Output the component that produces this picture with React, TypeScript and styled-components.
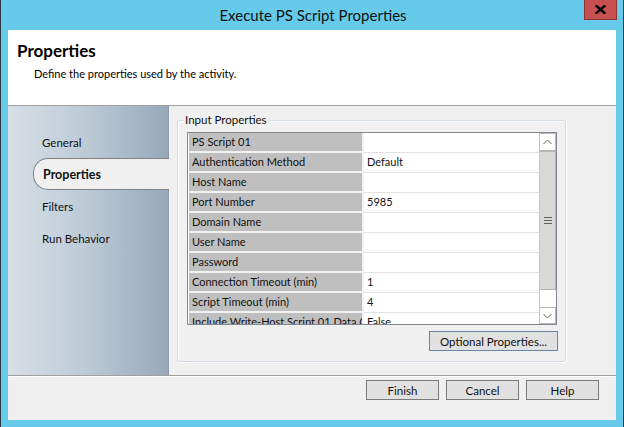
import React from "react";
import styled, { createGlobalStyle } from "styled-components";

const GlobalStyle = createGlobalStyle`
  html, body { margin: 0; padding: 0; }
  body { background: #66cbea; font-family: Lato, "Liberation Sans", sans-serif; color: #000; }
  * { box-sizing: border-box; }
`;

const Window = styled.div`
  width: 624px;
  height: 427px;
  background: #66cbea;
  border-left: 1px solid #2e3a40;
  border-right: 1px solid #2e3a40;
  padding: 0 7px 7px 7px;
  display: flex;
  flex-direction: column;
  position: relative;
`;

const TitleBar = styled.div`
  height: 30px;
  display: flex;
  align-items: center;
  justify-content: center;
`;

const Title = styled.div`
  font-size: 15px;
  color: #111;
  line-height: 30px;
  padding-left: 2px;
`;

const CloseButton = styled.div`
  position: absolute;
  top: 0;
  right: 6px;
  width: 33px;
  height: 20px;
  background: #c75050;
  border: 1px solid #8a3434;
  border-top: none;
  display: flex;
  align-items: center;
  justify-content: center;
`;

const Client = styled.div`
  flex: 1;
  display: flex;
  flex-direction: column;
  background: #f0f0f0;
`;

const Header = styled.div`
  height: 76px;
  background: #fff;
  border-bottom: 1px solid #a0a0a0;
  padding: 10px 0 0 9px;
`;

const HeaderTitle = styled.div`
  font-weight: 700;
  font-size: 17px;
  line-height: 22px;
`;

const HeaderDesc = styled.div`
  font-size: 11px;
  line-height: 15px;
  margin-top: 4px;
  padding-left: 17px;
`;

const Body = styled.div`
  height: 269px;
  display: flex;
`;

const Nav = styled.div`
  width: 161px;
  background: linear-gradient(to right, #d7dfe7 0%, #bccad6 50%, #97a8ba 100%);
  border-right: 1px solid #8f9aa6;
  padding-top: 20px;
  display: flex;
  flex-direction: column;
`;

const NavItem = styled.div<{ $active?: boolean }>`
  height: 32px;
  display: flex;
  align-items: center;
  font-size: ${(p) => (p.$active ? "12.5px" : "11.5px")};
  font-weight: ${(p) => (p.$active ? 700 : 400)};
  padding-left: ${(p) => (p.$active ? "9px" : "34px")};
  margin-left: ${(p) => (p.$active ? "25px" : "0")};
  margin-right: ${(p) => (p.$active ? "-1px" : "0")};
  background: ${(p) => (p.$active ? "#f0f0f0" : "transparent")};
  border: ${(p) => (p.$active ? "1px solid #808080" : "none")};
  border-right: none;
  border-radius: ${(p) => (p.$active ? "15px 0 0 15px" : "0")};
  color: #111;
`;

const Content = styled.div`
  flex: 1;
  padding: 14px 0 0 8px;
`;

const GroupBox = styled.div`
  position: relative;
  width: 389px;
  height: 242px;
  border: 1px solid #d2dbe3;
  border-radius: 3px;
  box-shadow: inset 1px 1px 0 #fff, 1px 1px 0 #fff;
  padding: 11px 8px 0 9px;
  display: flex;
  flex-direction: column;
`;

const Legend = styled.div`
  position: absolute;
  top: -8px;
  left: 5px;
  padding: 0 2px;
  background: #f0f0f0;
  font-size: 11.5px;
  line-height: 14px;
  color: #111;
`;

const Grid = styled.div`
  height: 193px;
  border: 1px solid #828790;
  background: #fff;
  display: flex;
`;

const Table = styled.div`
  flex: 1;
  overflow: hidden;
  padding-left: 1px;
`;

const Row = styled.div`
  display: grid;
  grid-template-columns: 173px 1fr;
  column-gap: 2px;
  height: 20px;
  background: #f2f2f2;
  align-items: start;
`;

const Label = styled.div`
  height: 18px;
  background: #bfbfbf;
  font-size: 11px;
  line-height: 18px;
  padding-left: 3px;
  white-space: nowrap;
  overflow: hidden;
  color: #111;
`;

const Value = styled.div`
  height: 20px;
  background: #fff;
  border-bottom: 1px solid #e2e2e2;
  font-size: 11px;
  line-height: 18px;
  padding-left: 3px;
  white-space: nowrap;
  color: #111;
`;

const ScrollBar = styled.div`
  width: 17px;
  display: flex;
  flex-direction: column;
  background: #fff;
  border-left: 1px solid #c4c4c4;
`;

const ScrollButton = styled.div<{ $h: number }>`
  height: ${(p) => p.$h}px;
  border: 1px solid #b9b9b9;
  border-left: none;
  background: #fff;
  display: flex;
  align-items: center;
  justify-content: center;
`;

const Thumb = styled.div`
  height: 139px;
  background: #d9d9d9;
  border: 1px solid #b4b4b4;
  border-left: none;
  display: flex;
  align-items: center;
  justify-content: center;
`;

const Track = styled.div`
  flex: 1;
  background: #fff;
`;

const GroupActions = styled.div`
  display: flex;
  justify-content: flex-end;
  margin-top: 6px;
  margin-right: -1px;
`;

const Button = styled.div<{ $w: number; $accent?: boolean }>`
  width: ${(p) => p.$w}px;
  height: 20px;
  background: #e1e1e1;
  border: 1px solid ${(p) => (p.$accent ? "#6686a8" : "#7a7a7a")};
  display: flex;
  align-items: center;
  justify-content: center;
  font-size: 11.5px;
  color: #111;
`;

const Footer = styled.div`
  flex: 1;
  border-top: 1px solid #a0a0a0;
  box-shadow: inset 0 1px 0 #fff;
  display: flex;
  justify-content: flex-end;
  align-items: flex-start;
  gap: 7px;
  padding: 4px 17px 0 0;
`;

const rows: [string, string][] = [
  ["PS Script 01", ""],
  ["Authentication Method", "Default"],
  ["Host Name", ""],
  ["Port Number", "5985"],
  ["Domain Name", ""],
  ["User Name", ""],
  ["Password", ""],
  ["Connection Timeout (min)", "1"],
  ["Script Timeout (min)", "4"],
  ["Include Write-Host Script 01 Data Output", "False"],
];

const navItems = ["General", "Properties", "Filters", "Run Behavior"];

export default function App() {
  return (
    <>
      <GlobalStyle />
      <Window>
        <TitleBar>
          <Title>Execute PS Script Properties</Title>
          <CloseButton>
            <svg width="11" height="9" viewBox="0 0 11 9">
              <path d="M1.5 1 L9.5 8 M9.5 1 L1.5 8" stroke="#000" strokeWidth="2.4" strokeLinecap="square" />
            </svg>
          </CloseButton>
        </TitleBar>
        <Client>
          <Header>
            <HeaderTitle>Properties</HeaderTitle>
            <HeaderDesc>Define the properties used by the activity.</HeaderDesc>
          </Header>
          <Body>
            <Nav>
              {navItems.map((n) => (
                <NavItem key={n} $active={n === "Properties"}>
                  {n}
                </NavItem>
              ))}
            </Nav>
            <Content>
              <GroupBox>
                <Legend>Input Properties</Legend>
                <Grid>
                  <Table>
                    {rows.map(([l, v]) => (
                      <Row key={l}>
                        <Label>{l}</Label>
                        <Value>{v}</Value>
                      </Row>
                    ))}
                  </Table>
                  <ScrollBar>
                    <ScrollButton $h={18}>
                      <svg width="9" height="6" viewBox="0 0 9 6">
                        <polyline points="0.5,5 4.5,1 8.5,5" fill="none" stroke="#606060" strokeWidth="1" />
                      </svg>
                    </ScrollButton>
                    <Thumb>
                      <svg width="8" height="7" viewBox="0 0 8 7">
                        <path d="M0 0.5 H8 M0 3.5 H8 M0 6.5 H8" stroke="#606060" strokeWidth="1" />
                      </svg>
                    </Thumb>
                    <Track />
                    <ScrollButton $h={17}>
                      <svg width="9" height="6" viewBox="0 0 9 6">
                        <polyline points="0.5,1 4.5,5 8.5,1" fill="none" stroke="#606060" strokeWidth="1" />
                      </svg>
                    </ScrollButton>
                  </ScrollBar>
                </Grid>
                <GroupActions>
                  <Button $w={129} $accent>
                    Optional Properties...
                  </Button>
                </GroupActions>
              </GroupBox>
            </Content>
          </Body>
          <Footer>
            <Button $w={73}>Finish</Button>
            <Button $w={73}>Cancel</Button>
            <Button $w={73}>Help</Button>
          </Footer>
        </Client>
      </Window>
    </>
  );
}
